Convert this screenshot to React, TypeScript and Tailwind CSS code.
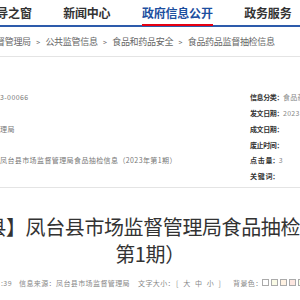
export default function App() {
  const bgColors = ["#ffffff", "#fafbe6", "#fff2e2", "#fde6e0", "#f3ffe1"];
  const rows: { left: string; label: string; value: string }[] = [
    { left: "3-00066", label: "信息分类：", value: "食品药品监督抽检信息" },
    { left: "", label: "发文日期：", value: "2023-03-10" },
    { left: "理局", label: "成文日期：", value: "" },
    { left: "", label: "废止时间：", value: "" },
    { left: "凤台县市场监督管理局食品抽检信息（2023年第1期）", label: "点 击 量：", value: "3" },
    { left: "", label: "关 键 词：", value: "" },
  ];
  return (
    <div className="w-[300px] h-[300px] overflow-hidden bg-white font-['Noto_Sans_CJK_SC','Noto_Sans',sans-serif]">
      <div className="h-[27px] border-b-2 border-[#2d5bab] flex items-start">
        <div className="flex gap-[31.5px] ml-[-3.7px] pt-[5px] text-[12px] tracking-[-0.2px] font-bold leading-[16px] text-[#333] whitespace-nowrap">
          <span>导之窗</span>
          <span>新闻中心</span>
          <span className="relative text-[#1d4f9f]">
            政府信息公开
            <span className="absolute left-0 right-0 top-[19px] h-[2px] bg-[#e60012]" />
          </span>
          <span>政务服务</span>
        </div>
      </div>
      <div className="mt-[9px] flex items-center ml-[-4px] text-[9px] tracking-[-0.3px] leading-[12px] text-[#666] whitespace-nowrap">
        <span>督管理局</span>
        <span className="mx-[5.5px] text-[7px]">&gt;</span>
        <span>公共监管信息</span>
        <span className="mx-[5.5px] text-[7px]">&gt;</span>
        <span>食品和药品安全</span>
        <span className="mx-[5.5px] text-[7px]">&gt;</span>
        <span>食品药品监督抽检信息</span>
      </div>
      <div className="mt-[8px] border-t border-b border-[#e4e4e4] pt-[32.6px] pb-[2.6px]">
        {rows.map((r, i) => (
          <div key={i} className="flex h-[15.8px] items-center whitespace-nowrap">
            <div className="w-[250px] shrink-0 text-[7px] tracking-[0.4px] text-[#777]">{r.left}</div>
            <div className="flex items-center">
              <span className="text-[7px] tracking-[-0.4px] font-bold text-[#333]">{r.label}</span>
              <span className="text-[7px] tracking-[0.3px] text-[#888]">{r.value}</span>
            </div>
          </div>
        ))}
      </div>
      <div className="mt-[26.5px] text-[20px] tracking-[-0.4px] leading-[26.5px] text-[#333]">
        <div className="ml-[-72.4px] whitespace-nowrap">【凤台县】凤台县市场监督管理局食品抽检信息（2023年</div>
        <div className="text-center">第1期）</div>
      </div>
      <div className="mt-[9.5px] flex items-center text-[7px] tracking-[0.4px] leading-[12px] text-[#888] whitespace-nowrap">
        <span className="w-[19px] shrink-0 pl-[1px]">:39</span>
        <span className="w-[119px] shrink-0">信息来源：凤台县市场监督管理局</span>
        <span className="w-[38px] shrink-0">文字大小：</span>
        <div className="w-[57px] shrink-0 flex gap-[4.4px]">
          <span>[</span>
          <span>大</span>
          <span>中</span>
          <span>小</span>
          <span>]</span>
        </div>
        <span className="w-[29px] shrink-0">背景色：</span>
        <div className="flex gap-[2px]">
          {bgColors.map((c) => (
            <span key={c} className="w-[7px] h-[7px] border border-[#aaa] shrink-0" style={{ backgroundColor: c }} />
          ))}
        </div>
      </div>
    </div>
  );
}
